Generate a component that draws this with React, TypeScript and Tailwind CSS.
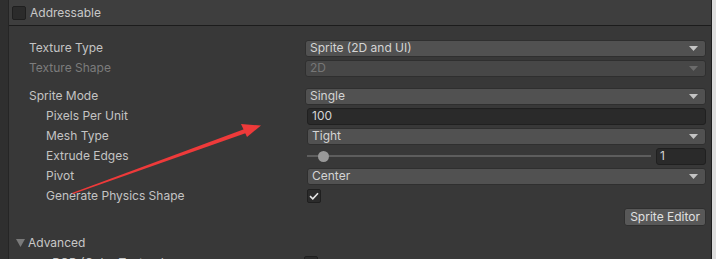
import React from 'react';

const Caret = ({ disabled }: { disabled?: boolean }) => (
  <svg width="9" height="5" viewBox="0 0 9 5" className="shrink-0">
    <path d="M0 0 H9 L4.5 5 Z" fill={disabled ? '#6b6b6b' : '#c4c4c4'} />
  </svg>
);

const Dropdown = ({ value, disabled }: { value: string; disabled?: boolean }) => (
  <div
    className={`h-[17px] w-full flex items-center justify-between pl-[4px] pr-[7px] rounded-[3px] border border-[#2f2f2f] ${
      disabled ? 'bg-[#474747] text-[#767676]' : 'bg-[#515151] text-[#d4d4d4]'
    }`}
  >
    <span className="leading-none">{value}</span>
    <Caret disabled={disabled} />
  </div>
);

const Row = ({
  label,
  indent,
  disabled,
  children,
}: {
  label: string;
  indent?: boolean;
  disabled?: boolean;
  children?: React.ReactNode;
}) => (
  <div className="h-[20px] flex items-center">
    <div
      className={`w-[276px] shrink-0 ${indent ? 'pl-[17px]' : ''} ${
        disabled ? 'text-[#7c7c7c]' : 'text-[#c4c4c4]'
      }`}
    >
      {label}
    </div>
    <div className={`flex-1 flex items-center ${indent ? 'pl-[2px]' : ''}`}>{children}</div>
  </div>
);

const CheckBox = ({ checked }: { checked?: boolean }) => (
  <div className="w-[14px] h-[14px] rounded-[2px] bg-[#2b2b2b] border border-[#1f1f1f] flex items-center justify-center">
    {checked && (
      <svg width="10" height="8" viewBox="0 0 10 8">
        <path d="M1 4.2 L3.8 6.8 L9 1.2" stroke="#e6e6e6" strokeWidth="1.6" fill="none" />
      </svg>
    )}
  </div>
);

export default function App() {
  return (
    <div
      className="relative w-[716px] h-[259px] overflow-hidden flex bg-[#383838] text-[12px]"
      style={{ fontFamily: 'Inter, "Noto Sans", sans-serif' }}
    >
      {/* left gutter */}
      <div className="w-[9px] shrink-0 bg-[#2f2f2f] border-r border-[#252525]" />

      <div className="flex-1 flex flex-col">
        {/* header */}
        <div className="h-[26px] shrink-0 bg-[#3e3e3e] border-b border-[#1c1c1c] flex items-center pl-[3px] gap-[4px]">
          <CheckBox />
          <span className="text-[#c8c8c8]">Addressable</span>
        </div>

        <div className="flex flex-col pl-[20px] pr-[5px] pt-[12px]">
          <Row label="Texture Type">
            <Dropdown value="Sprite (2D and UI)" />
          </Row>
          <Row label="Texture Shape" disabled>
            <Dropdown value="2D" disabled />
          </Row>
          <div className="h-[8px]" />
          <Row label="Sprite Mode">
            <Dropdown value="Single" />
          </Row>
          <Row label="Pixels Per Unit" indent>
            <div className="h-[17px] w-full flex items-center pl-[4px] rounded-[3px] bg-[#2a2a2a] border border-[#202020] text-[#d4d4d4]">
              100
            </div>
          </Row>
          <Row label="Mesh Type" indent>
            <Dropdown value="Tight" />
          </Row>
          <Row label="Extrude Edges" indent>
            <div className="flex-1 relative h-[17px] flex items-center">
              <div className="h-[2px] w-full bg-[#5d5d5d]" />
              <div className="absolute left-[11px] top-[3px] w-[11px] h-[11px] rounded-full bg-[#999999]" />
            </div>
            <div className="ml-[5px] w-[50px] h-[17px] flex items-center pl-[3px] rounded-[3px] bg-[#2a2a2a] border border-[#202020] text-[#d4d4d4]">
              1
            </div>
          </Row>
          <Row label="Pivot" indent>
            <Dropdown value="Center" />
          </Row>
          <Row label="Generate Physics Shape" indent>
            <CheckBox checked />
          </Row>
          <div className="h-[22px] flex items-center justify-end">
            <div className="h-[18px] px-[5px] flex items-center rounded-[3px] bg-[#585858] border border-[#2f2f2f] text-[#e0e0e0]">
              Sprite Editor
            </div>
          </div>
          <div className="h-[5px]" />
          <div className="h-[20px] flex items-center -ml-[13px] gap-[3px]">
            <svg width="9" height="8" viewBox="0 0 9 8">
              <path d="M0 0 H9 L4.5 8 Z" fill="#7a7a7a" />
            </svg>
            <span className="text-[#c8c8c8]">Advanced</span>
          </div>
          <Row label="sRGB (Color Texture)" indent>
            <div className="-ml-[3px]">
              <CheckBox checked />
            </div>
          </Row>
        </div>
      </div>

      {/* right edge */}
      <div className="w-[1px] shrink-0 bg-[#1e1e1e]" />
      <div className="w-[4px] shrink-0 bg-[#dedede]" />

      {/* red annotation arrow */}
      <svg className="absolute inset-0 pointer-events-none" width="716" height="259" viewBox="0 0 716 259">
        <polygon points="72,193 246,128.5 247.5,132.5 73,194" fill="#ee3a3a" />
        <polygon points="241,124 261,125.5 247,137" fill="#ee3a3a" />
      </svg>
    </div>
  );
}
